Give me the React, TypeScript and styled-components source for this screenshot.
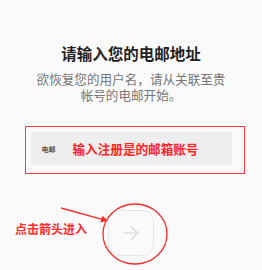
import React from "react";
import styled, { createGlobalStyle } from "styled-components";

const GlobalStyle = createGlobalStyle`
  html, body {
    margin: 0;
    padding: 0;
    background: #fafafa;
  }
  body {
    font-family: "Noto Sans CJK SC", "Noto Sans", sans-serif;
  }
`;

const App: React.FC = () => {
  return (
    <Page>
      <GlobalStyle />
      <Title>请输入您的电邮地址</Title>
      <Subtitle>
        <Line>欲恢复您的用户名，请从关联至贵</Line>
        <Line>帐号的电邮开始。</Line>
      </Subtitle>
      <HighlightBox>
        <InputField>
          <FieldLabel>电邮</FieldLabel>
          <Hint>输入注册是的邮箱账号</Hint>
        </InputField>
      </HighlightBox>
      <ActionArea>
        <NextButton aria-label="next">
          <svg width="18" height="18" viewBox="0 0 24 24" fill="none" stroke="#dddddd" strokeWidth="2.2" strokeLinecap="round" strokeLinejoin="round">
            <path d="M3 12h18" />
            <path d="M13 4l8 8-8 8" />
          </svg>
        </NextButton>
        <Note>点击箭头进入</Note>
        {/* hand-drawn annotation: pointer line + circle round the button */}
        <Overlay width="262" height="70" viewBox="0 0 262 70">
          <line x1="61" y1="8" x2="103" y2="19.6" stroke="#ff2a2a" strokeWidth="1.3" />
          <path d="M108 21 L100.5 22.2 L102.3 15.8 Z" fill="#ff2a2a" />
          <ellipse cx="135" cy="34" rx="32" ry="30" fill="none" stroke="#ff2a2a" strokeWidth="1.3" />
        </Overlay>
      </ActionArea>
    </Page>
  );
};

export default App;

// Styled components
const Page = styled.div`
  width: 262px;
  height: 270px;
  display: flex;
  flex-direction: column;
  align-items: center;
  overflow: hidden;
`;

const Title = styled.h1`
  margin: 43px 0 0;
  font-size: 15.5px;
  line-height: 20px;
  font-weight: 700;
  color: #222;
`;

const Subtitle = styled.div`
  margin: 8px 0 0;
  font-size: 12.6px;
  color: #777;
  text-align: center;
`;

const Line = styled.div`
  line-height: 16px;
  height: 16px;
`;

const HighlightBox = styled.div`
  margin-top: 23px;
  margin-left: 7px;
  width: 220px;
  box-sizing: border-box;
  border: 1.5px solid #ff3b3b;
  padding: 5px 12px 8px 5px;
`;

const InputField = styled.div`
  height: 33px;
  background: #eeeeee;
  display: flex;
  align-items: center;
  padding-left: 11px;
`;

const FieldLabel = styled.span`
  font-size: 7px;
  font-weight: 700;
  color: #555;
  width: 31px;
`;

const Hint = styled.span`
  font-size: 12.6px;
  font-weight: 700;
  color: #ff2424;
`;

const ActionArea = styled.div`
  position: relative;
  align-self: stretch;
  margin-top: 36px;
  display: flex;
  justify-content: center;
`;

const NextButton = styled.button`
  width: 46px;
  height: 46px;
  border: 1px solid #e6e6e6;
  border-radius: 12px;
  background: #fafafa;
  display: flex;
  align-items: center;
  justify-content: center;
  padding: 0;
`;

const Note = styled.span`
  position: absolute;
  left: 15px;
  top: 10px;
  font-size: 12px;
  font-weight: 700;
  color: #ff2a2a;
`;

const Overlay = styled.svg`
  position: absolute;
  left: 0;
  top: -10px;
  pointer-events: none;
`;
